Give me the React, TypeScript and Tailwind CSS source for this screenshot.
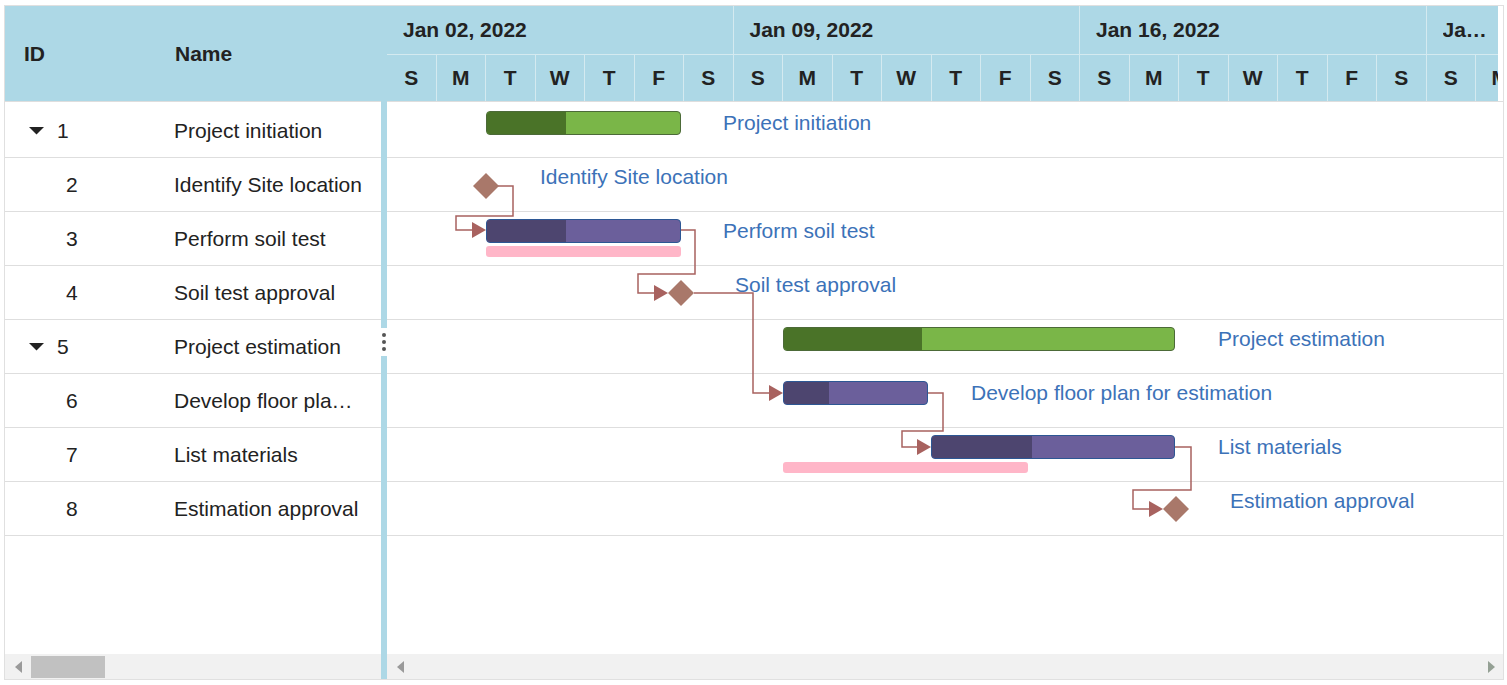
import React from 'react';

type Row = { id: number; name: string; parent?: boolean };

const rows: Row[] = [
  { id: 1, name: 'Project initiation', parent: true },
  { id: 2, name: 'Identify Site location' },
  { id: 3, name: 'Perform soil test' },
  { id: 4, name: 'Soil test approval' },
  { id: 5, name: 'Project estimation', parent: true },
  { id: 6, name: 'Develop floor plan for estimation' },
  { id: 7, name: 'List materials' },
  { id: 8, name: 'Estimation approval' },
];

const weeks = ['Jan 02, 2022', 'Jan 09, 2022', 'Jan 16, 2022'];
const dayLetters = ['S', 'M', 'T', 'W', 'T', 'F', 'S'];
const days = Array.from({ length: 23 }, (_, i) => dayLetters[i % 7]);

// chart coordinates, origin = left edge of timeline / top of first row
const bars = [
  { x: 99, y: 7, w: 195, p: 79, parent: true },
  { x: 99, y: 115, w: 195, p: 79 },
  { x: 396, y: 223, w: 392, p: 138, parent: true },
  { x: 396, y: 277, w: 145, p: 45 },
  { x: 544, y: 331, w: 244, p: 100 },
];

const baselines = [
  { x: 99, y: 142, w: 195 },
  { x: 396, y: 358, w: 245 },
];

const milestones = [
  { cx: 99, cy: 82 },
  { cx: 294, cy: 189 },
  { cx: 789, cy: 405 },
];

const labels = [
  { x: 336, cy: 19, text: 'Project initiation' },
  { x: 153, cy: 73, text: 'Identify Site location' },
  { x: 336, cy: 127, text: 'Perform soil test' },
  { x: 348, cy: 181, text: 'Soil test approval' },
  { x: 831, cy: 235, text: 'Project estimation' },
  { x: 584, cy: 289, text: 'Develop floor plan for estimation' },
  { x: 831, cy: 343, text: 'List materials' },
  { x: 843, cy: 397, text: 'Estimation approval' },
];

const connectors = [
  { pts: '110,82 126,82 126,112 69,112 69,126 86,126', tip: [99, 126] },
  { pts: '294,126 308,126 308,170 251,170 251,189 267,189', tip: [281, 189] },
  { pts: '307,189 366,189 366,289 383,289', tip: [396, 289] },
  { pts: '541,289 556,289 556,327 515,327 515,343 531,343', tip: [544, 343] },
  { pts: '788,343 804,343 804,386 746,386 746,405 763,405', tip: [776, 405] },
];

function Caret() {
  return (
    <svg width="15" height="8" viewBox="0 0 15 8">
      <polygon points="0,0 15,0 7.5,7.5" fill="#222" />
    </svg>
  );
}

function ScrollArrow({ dir }: { dir: 'left' | 'right' }) {
  return (
    <svg width="7" height="12" viewBox="0 0 7 12">
      {dir === 'left' ? (
        <polygon points="7,0 7,12 0,6" fill="#9a9a9a" />
      ) : (
        <polygon points="0,0 0,12 7,6" fill="#94a094" />
      )}
    </svg>
  );
}

function GridRow({ row }: { row: Row }) {
  return (
    <div className="flex h-[54px] items-center border-b border-[#dedede] text-[21px] text-[#222]">
      <div className="flex w-[150px] items-center">
        {row.parent ? (
          <>
            <span className="ml-[24px] flex items-center">
              <Caret />
            </span>
            <span className="ml-[13px]">{row.id}</span>
          </>
        ) : (
          <span className="ml-[61px]">{row.id}</span>
        )}
      </div>
      <div className="ml-[19px] w-[190px] truncate">{row.name}</div>
    </div>
  );
}

function TaskBar({ x, y, w, p, parent }: { x: number; y: number; w: number; p: number; parent?: boolean }) {
  return (
    <div
      className={`absolute h-[24px] overflow-hidden rounded-[4px] border ${
        parent ? 'border-[#4c6a38] bg-[#7ab648]' : 'border-[#2d5794] bg-[#6b5f9b]'
      }`}
      style={{ left: x, top: y, width: w }}
    >
      <div className={`h-full ${parent ? 'bg-[#4a7328]' : 'bg-[#4d456f]'}`} style={{ width: p }} />
    </div>
  );
}

export default function App() {
  return (
    <div className="min-h-screen bg-white pl-[4px] pt-[5px] font-['Liberation_Sans',Arial,sans-serif]">
      <div className="flex h-[675px] w-[1500px] border border-[#e0e0e0]">
        {/* Left grid */}
        <div className="flex w-[376px] flex-col">
          <div className="flex h-[96px] items-center border-b border-[#dedede] bg-[#add8e6] text-[21px] font-bold text-[#222]">
            <div className="w-[150px] pl-[19px]">ID</div>
            <div className="pl-[20px]">Name</div>
          </div>
          <div className="flex-1 pt-[2px]">
            {rows.map((r) => (
              <GridRow key={r.id} row={r} />
            ))}
          </div>
          <div className="relative h-[25px] bg-[#f1f1f1]">
            <div className="absolute left-[10px] top-[7px]">
              <ScrollArrow dir="left" />
            </div>
            <div className="absolute left-[26px] top-[2px] h-[22px] w-[74px] bg-[#c1c1c1]" />
          </div>
        </div>

        {/* Splitter */}
        <div className="flex w-[6px] flex-col bg-[#add8e6]">
          <div className="h-[322px]" />
          <div className="flex h-[28px] flex-col items-center gap-[3px] bg-white pt-[5px]">
            <div className="h-[4px] w-[4px] rounded-full bg-[#555]" />
            <div className="h-[4px] w-[4px] rounded-full bg-[#555]" />
            <div className="h-[4px] w-[4px] rounded-full bg-[#555]" />
          </div>
        </div>

        {/* Chart */}
        <div className="flex min-w-0 flex-1 flex-col overflow-hidden">
          <div className="border-b border-[#dedede] bg-white pr-[5px]">
            <div className="overflow-hidden bg-[#add8e6] text-[21px] font-bold text-[#222]">
              <div className="flex h-[49px] border-b border-[#d4eaf0]">
                {weeks.map((w) => (
                  <div key={w} className="flex w-[346.5px] shrink-0 items-center border-r border-[#d4eaf0] pl-[16px]">
                    {w}
                  </div>
                ))}
                <div className="flex min-w-0 flex-1 items-center overflow-hidden pl-[16px] pr-[6px]">
                  <span className="truncate">Jan 23, 2022</span>
                </div>
              </div>
              <div className="flex h-[46px]">
                {days.map((d, i) => (
                  <div
                    key={i}
                    className="flex w-[49.5px] shrink-0 items-center justify-center border-r border-[#d4eaf0]"
                  >
                    {d}
                  </div>
                ))}
              </div>
            </div>
          </div>

          <div className="flex-1 pt-[2px]">
            <div className="relative">
              {rows.map((r) => (
                <div key={r.id} className="h-[54px] border-b border-[#dedede]" />
              ))}

              {baselines.map((b, i) => (
                <div
                  key={i}
                  className="absolute h-[11px] rounded-[3px] bg-[#ffb6c8]"
                  style={{ left: b.x, top: b.y, width: b.w }}
                />
              ))}
              {bars.map((b, i) => (
                <TaskBar key={i} {...b} />
              ))}

              <svg className="pointer-events-none absolute left-0 top-0" width="1116" height="440">
                {connectors.map((c, i) => (
                  <g key={i}>
                    <polyline points={c.pts} fill="none" stroke="#a8625f" strokeWidth="1.5" />
                    <polygon
                      points={`${c.tip[0]},${c.tip[1]} ${c.tip[0] - 14},${c.tip[1] - 8} ${c.tip[0] - 14},${c.tip[1] + 8}`}
                      fill="#a8625f"
                    />
                  </g>
                ))}
                {milestones.map((m, i) => (
                  <polygon
                    key={i}
                    points={`${m.cx - 13},${m.cy} ${m.cx},${m.cy - 13} ${m.cx + 13},${m.cy} ${m.cx},${m.cy + 13}`}
                    fill="#a9786a"
                  />
                ))}
              </svg>

              {labels.map((l) => (
                <div
                  key={l.text}
                  className="absolute h-[24px] whitespace-nowrap text-[21px] leading-[24px] text-[#3c72b8]"
                  style={{ left: l.x, top: l.cy - 12 }}
                >
                  {l.text}
                </div>
              ))}
            </div>
          </div>

          <div className="relative h-[25px] bg-[#f1f1f1]">
            <div className="absolute left-[10px] top-[7px]">
              <ScrollArrow dir="left" />
            </div>
            <div className="absolute right-[8px] top-[7px]">
              <ScrollArrow dir="right" />
            </div>
          </div>
        </div>
      </div>
    </div>
  );
}
